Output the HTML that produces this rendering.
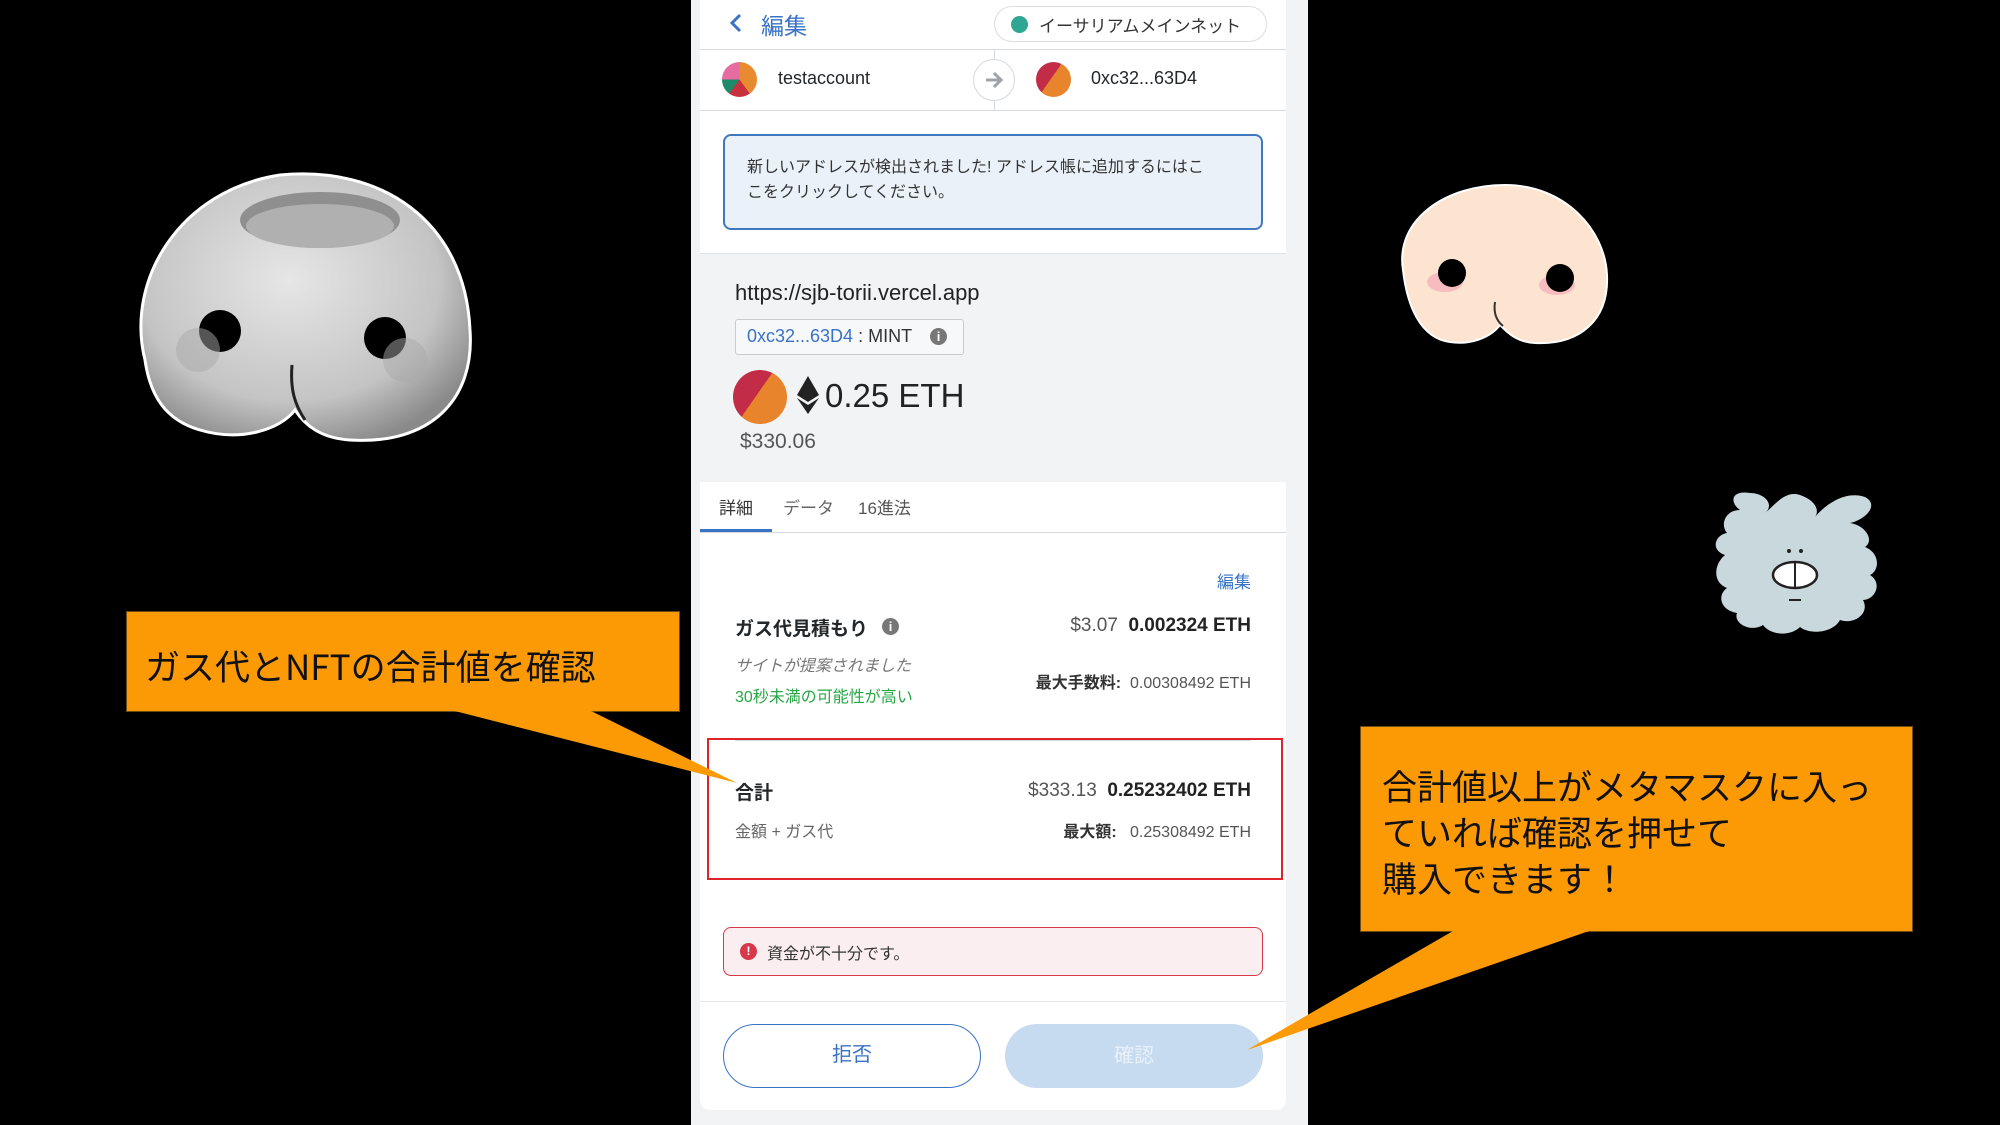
<!DOCTYPE html>
<html><head><meta charset="utf-8">
<style>
*{margin:0;padding:0;box-sizing:border-box}
body{width:2000px;height:1125px;background:#000;position:relative;overflow:hidden;font-family:"Liberation Sans","Noto Sans CJK JP",sans-serif;color:#24272a}
.a{position:absolute}
#panel{left:691px;top:0;width:617px;height:1125px;background:#f2f3f4}
#card{left:700px;top:0;width:586px;height:1110px;background:#fff;border-radius:0 0 10px 10px}
.t{position:absolute;white-space:nowrap}
.r{position:absolute;white-space:nowrap;right:749px;text-align:right}
.call{background:#fb9a05;border:1px solid #6b4b10;font-family:"Noto Sans CJK JP",sans-serif;color:#111;font-size:35px}
</style></head><body>

<svg class="a" style="left:120px;top:160px" width="380" height="300" viewBox="0 0 380 300">
<defs><radialGradient id="g1" cx="45%" cy="40%" r="65%"><stop offset="0" stop-color="#e6e6e6"/><stop offset=".7" stop-color="#c4c4c4"/><stop offset="1" stop-color="#8a8a8a"/></radialGradient></defs>
<path d="M25,200 C5,120 60,30 160,15 C260,5 345,60 350,170 C355,240 310,285 230,280 C200,278 185,265 175,250 C160,270 120,282 80,270 C45,260 30,235 25,200Z" fill="url(#g1)" stroke="#fff" stroke-width="3"/>
<ellipse cx="200" cy="60" rx="80" ry="28" fill="#8f8f8f"/>
<ellipse cx="200" cy="66" rx="74" ry="22" fill="#b0b0b0"/>
<circle cx="100" cy="171" r="21" fill="#000"/>
<circle cx="265" cy="178" r="21" fill="#000"/>
<circle cx="78" cy="190" r="22" fill="#aaa" opacity=".5"/>
<circle cx="285" cy="200" r="22" fill="#aaa" opacity=".5"/>
<path d="M172,205 C170,230 175,245 185,260" stroke="#222" stroke-width="3" fill="none"/>
</svg>
<svg class="a" style="left:1395px;top:180px" width="220" height="170" viewBox="0 0 220 170">
<path d="M8,90 C0,40 50,5 110,5 C170,5 210,50 212,95 C214,140 185,165 140,163 C120,162 110,150 105,145 C95,158 75,165 55,162 C25,158 12,125 8,90Z" fill="#fde4d0" stroke="#fff" stroke-width="2"/>
<ellipse cx="50" cy="102" rx="18" ry="10" fill="#f6bcc0"/>
<ellipse cx="162" cy="105" rx="18" ry="10" fill="#f6bcc0"/>
<circle cx="57" cy="93" r="14" fill="#000"/>
<circle cx="165" cy="98" r="14" fill="#000"/>
<path d="M100,122 C98,135 103,142 108,146" stroke="#333" stroke-width="2" fill="none"/>
</svg>
<svg class="a" style="left:1705px;top:485px" width="180" height="150" viewBox="0 0 180 150">
<path d="M20,70 C5,65 10,50 22,48 C15,40 20,25 35,25 C25,18 25,5 45,8 C60,8 70,20 60,28 C70,20 80,5 95,10 C110,15 115,25 110,32 C120,20 140,5 160,12 C175,20 160,35 145,38 C160,40 170,55 160,62 C175,68 175,85 165,90 C178,98 170,115 158,115 C165,128 150,140 135,135 C128,148 105,150 95,142 C85,152 65,150 58,140 C45,148 28,138 32,128 C15,125 12,110 22,103 C8,98 8,80 20,70Z" fill="#c8d8dc"/>
<ellipse cx="90" cy="90" rx="22" ry="13" fill="#fff" stroke="#222" stroke-width="2.5"/>
<line x1="90" y1="78" x2="90" y2="102" stroke="#222" stroke-width="2"/>
<circle cx="84" cy="66" r="2" fill="#222"/><circle cx="96" cy="66" r="2" fill="#222"/>
<line x1="84" y1="115" x2="96" y2="115" stroke="#222" stroke-width="2"/>
</svg>

<div id="panel" class="a"></div>
<div id="card" class="a"></div>

<svg class="a" style="left:728px;top:13px" width="16" height="20" viewBox="0 0 16 20"><path d="M12,2 L4,10 L12,18" stroke="#3a73c6" stroke-width="3" fill="none"/></svg>
<div class="t" style="left:761px;top:7px;font-size:23px;color:#3a73c6">編集</div>
<div class="a" style="left:994px;top:6px;width:273px;height:36px;border:1px solid #dcdde0;border-radius:18px"></div>
<div class="a" style="left:1011px;top:16px;width:17px;height:17px;border-radius:50%;background:#2fa593"></div>
<div class="t" style="left:1039px;top:12px;font-size:17px;color:#333">イーサリアムメインネット</div>
<div class="a" style="left:700px;top:49px;width:586px;height:1px;background:#d6d9dc"></div>
<div class="a" style="left:994px;top:49px;width:1px;height:62px;background:#d6d9dc"></div>
<div class="a" style="left:700px;top:110px;width:586px;height:1px;background:#d6d9dc"></div>
<div class="a" style="left:722px;top:62px;width:35px;height:35px;border-radius:50%;background:conic-gradient(#e88a2f 0 40%,#c8303e 40% 60%,#1d8a6a 60% 75%,#e66ba0 75% 100%)"></div>
<div class="t" style="left:778px;top:68px;font-size:18px">testaccount</div>
<div class="a" style="left:973px;top:59px;width:42px;height:42px;border-radius:50%;background:#fff;border:1px solid #d6d9dc"></div>
<svg class="a" style="left:983px;top:69px" width="22" height="22" viewBox="0 0 22 22"><path d="M3,11 H18 M11,4 L18,11 L11,18" stroke="#9fa3a8" stroke-width="3" fill="none"/></svg>
<div class="a" style="left:1036px;top:62px;width:35px;height:35px;border-radius:50%;background:linear-gradient(125deg,#c22c47 0 45%,#e8842c 45%)"></div>
<div class="t" style="left:1091px;top:68px;font-size:18px">0xc32...63D4</div>

<div class="a" style="left:723px;top:134px;width:540px;height:96px;background:#eaf1f9;border:2px solid #3f78bd;border-radius:8px"></div>
<div class="t" style="left:747px;top:155px;font-size:16px;line-height:25px;color:#333">新しいアドレスが検出されました! アドレス帳に追加するにはこ<br>こをクリックしてください。</div>

<div class="a" style="left:700px;top:253px;width:586px;height:229px;background:#f2f3f4;border-top:1px solid #e0e2e4"></div>
<div class="t" style="left:735px;top:280px;font-size:22px;color:#222">https://sjb-torii.vercel.app</div>
<div class="a" style="left:735px;top:319px;width:229px;height:36px;border:1.5px solid #c9cbce;border-radius:3px;background:#f7f8f9"></div>
<div class="t" style="left:747px;top:326px;font-size:18px;color:#3a73c6">0xc32...63D4 <span style="color:#333">: MINT</span></div>
<div class="a" style="left:930px;top:328px;width:17px;height:17px;border-radius:50%;background:#777;color:#fff;font-size:13px;font-weight:bold;text-align:center;line-height:17px">i</div>
<div class="a" style="left:733px;top:370px;width:54px;height:54px;border-radius:50%;background:linear-gradient(125deg,#c22c47 0 45%,#e8842c 45%)"></div>
<svg class="a" style="left:797px;top:376px" width="22" height="38" viewBox="0 0 22 38"><path d="M11,0 L22,19 L11,26 L0,19Z" fill="#222"/><path d="M11,29 L22,22 L11,38 L0,22Z" fill="#222"/></svg>
<div class="t" style="left:825px;top:377px;font-size:33px;color:#222">0.25 ETH</div>
<div class="t" style="left:740px;top:430px;font-size:21px;color:#555">$330.06</div>

<div class="t" style="left:719px;top:494px;font-size:17px;color:#333">詳細</div>
<div class="t" style="left:783px;top:494px;font-size:17px;color:#666">データ</div>
<div class="t" style="left:858px;top:494px;font-size:17px;color:#555">16進法</div>
<div class="a" style="left:700px;top:532px;width:586px;height:1px;background:#d6d9dc"></div>
<div class="a" style="left:700px;top:529px;width:72px;height:3px;background:#3a73c6"></div>

<div class="r" style="top:568px;font-size:17px;color:#3a73c6">編集</div>
<div class="t" style="left:735px;top:614px;font-size:19px;font-weight:bold">ガス代見積もり</div>
<div class="a" style="left:882px;top:618px;width:17px;height:17px;border-radius:50%;background:#777;color:#fff;font-size:13px;font-weight:bold;text-align:center;line-height:17px">i</div>
<div class="r" style="top:615px;font-size:19px;color:#555">$3.07 <b style="color:#222">&nbsp;0.002324 ETH</b></div>
<div class="t" style="left:735px;top:652px;font-size:16px;color:#777;font-style:italic">サイトが提案されました</div>
<div class="t" style="left:735px;top:683px;font-size:16px;color:#28a745">30秒未満の可能性が高い</div>
<div class="r" style="top:669px;font-size:16px;color:#555"><b style="color:#333">最大手数料:</b>&nbsp; 0.00308492 ETH</div>

<div class="a" style="left:735px;top:740px;width:516px;height:1px;background:#d6d9dc"></div>
<div class="a" style="left:707px;top:738px;width:576px;height:142px;border:2px solid #e0232b"></div>
<div class="t" style="left:735px;top:778px;font-size:19px;font-weight:bold">合計</div>
<div class="r" style="top:780px;font-size:19px;color:#555">$333.13 <b style="color:#222">&nbsp;0.25232402 ETH</b></div>
<div class="t" style="left:735px;top:818px;font-size:16px;color:#666">金額 + ガス代</div>
<div class="r" style="top:818px;font-size:16px;color:#555"><b style="color:#333">最大額:</b>&nbsp;&nbsp; 0.25308492 ETH</div>

<div class="a" style="left:723px;top:927px;width:540px;height:49px;background:#fbeef0;border:1.5px solid #d7384a;border-radius:8px"></div>
<div class="a" style="left:740px;top:943px;width:17px;height:17px;border-radius:50%;background:#d7384a;color:#fff;font-size:12px;font-weight:bold;text-align:center;line-height:17px">!</div>
<div class="t" style="left:767px;top:940px;font-size:16px;color:#333">資金が不十分です。</div>
<div class="a" style="left:700px;top:1001px;width:586px;height:1px;background:#e4e6e8"></div>
<div class="a" style="left:723px;top:1024px;width:258px;height:64px;border:1.5px solid #3a73c6;border-radius:32px;color:#3a73c6;font-size:20px;text-align:center;line-height:61px">拒否</div>
<div class="a" style="left:1005px;top:1024px;width:258px;height:64px;background:#c6daf0;border-radius:32px;color:#eaf1fa;font-size:20px;text-align:center;line-height:64px">確認</div>

<div class="a call" style="left:126px;top:611px;width:554px;height:101px;padding:28px 0 0 18px">ガス代とNFTの合計値を確認</div>
<div class="a call" style="left:1360px;top:726px;width:553px;height:206px;padding:36px 0 0 21px;line-height:46px">合計値以上がメタマスクに入っ<br>ていれば確認を押せて<br>購入できます！</div>
<svg class="a" style="left:0;top:0" width="2000" height="1125"><polygon points="447,709 587,709 737,783" fill="#fb9a05"/><polygon points="1453,931 1589,931 1247,1050" fill="#fb9a05"/></svg>
</body></html>
